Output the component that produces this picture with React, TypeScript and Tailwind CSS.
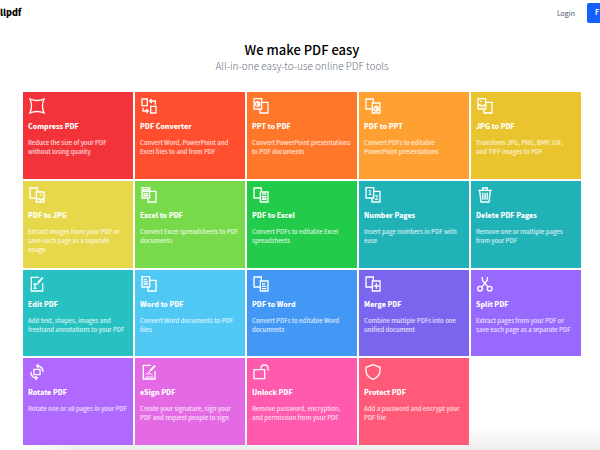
import type { ReactNode } from 'react'

interface Tool {
  title: string
  description: string
  color: string
  icon: ReactNode
}

// Outline of the page behind / in front, shared by the conversion icons
const frontLeft = (
  <>
    <path d="M3 2H26V33H3Z" />
    <path d="M27 13H45V45H21V34" />
  </>
)

const frontRight = (
  <>
    <path d="M21 33H3V3H25V14" />
    <path d="M22 15H45V45H22Z" />
  </>
)

const icons = {
  compress: <path d="M3 3Q24 12 45 3Q36 24 45 45Q24 36 3 45Q12 24 3 3Z" />,
  converter: (
    <>
      <path d="M3 3H19V23H3Z" />
      <path d="M29 25H45V45H29Z" />
      <path d="M43 20V9H27M32 3L26 9L32 15" />
      <path d="M6 29V39H21M16 33L22 39L16 45" />
    </>
  ),
  pptToPdf: (
    <>
      {frontLeft}
      <circle cx="14" cy="18" r="7" />
      <path d="M14 11V18H21M14 18L19 23" />
    </>
  ),
  pdfToPpt: (
    <>
      {frontRight}
      <circle cx="34" cy="32" r="7" />
      <path d="M34 25V32H41M34 32L39 37" />
    </>
  ),
  jpgToPdf: (
    <>
      {frontLeft}
      <path d="M3 23L9 20L15 26L26 19" />
      <path d="M9 10H13" />
    </>
  ),
  pdfToJpg: (
    <>
      {frontRight}
      <path d="M22 38L29 34L35 40L45 33" />
      <path d="M32 24H37" />
    </>
  ),
  excelToPdf: (
    <>
      {frontLeft}
      <path d="M8 8H21V13H8Z" />
      <path d="M7 19H22M7 26H22M10 17V29M18 17V29" />
    </>
  ),
  pdfToExcel: (
    <>
      {frontRight}
      <path d="M27 21H40" />
      <path d="M26 29H41M26 37H41M30 26V40M37 26V40" />
    </>
  ),
  number: (
    <>
      {frontLeft}
      <text x="14" y="25" textAnchor="middle" fontSize="20" fontWeight="700" fill="currentColor" stroke="none">
        1
      </text>
      <text x="34" y="38" textAnchor="middle" fontSize="19" fontWeight="700" fill="currentColor" stroke="none">
        2
      </text>
    </>
  ),
  trash: (
    <>
      <path d="M4 10H44M17 9V3H31V9" />
      <path d="M8 11L12 45H36L40 11" />
      <path d="M17 17L18 38M24 17V38M31 17L30 38" />
    </>
  ),
  edit: (
    <>
      <path d="M30 4H7V45H41V22" />
      <path d="M27 21L41 5" strokeWidth="6" />
      <path d="M23 26L26 23" />
      <path d="M13 24H23M18 24V37M13 37H23" />
    </>
  ),
  wordToPdf: (
    <>
      {frontLeft}
      <path d="M8 11H17M8 17H21M8 24H21" />
    </>
  ),
  pdfToWord: (
    <>
      {frontRight}
      <path d="M27 24H36M27 31H40M27 38H40" />
    </>
  ),
  merge: (
    <>
      {frontRight}
      <path d="M34 22V38M26 30H42" />
    </>
  ),
  split: (
    <>
      <circle cx="9" cy="38" r="7" />
      <circle cx="38" cy="38" r="7" />
      <path d="M14 33L30 14L32 3M33 33L17 14L15 3" />
    </>
  ),
  rotate: (
    <>
      <path d="M15 16H33V32H15Z" />
      <path d="M24 6C36 6 42 14 42 24M29 1L23 6L29 11" />
      <path d="M24 42C12 42 6 34 6 24M19 37L25 42L19 47" />
    </>
  ),
  sign: (
    <>
      <path d="M30 4H7V45H42V22" />
      <path d="M27 21L42 5" strokeWidth="6" />
      <path d="M22 27L26 23" />
      <path d="M13 32L19 28L23 32L27 28L31 32H35M13 39H36" strokeWidth="3" />
    </>
  ),
  unlock: (
    <>
      <path d="M3 17H35V44H3Z" />
      <path d="M24 17V12C24 6 28 3 34 3S45 6 45 12V20" />
    </>
  ),
  protect: <path d="M24 2L45 10V20C45 32 36 41 24 46C12 41 3 32 3 20V10Z" />,
}

const tools: Tool[] = [
  { title: 'Compress PDF', description: 'Reduce the size of your PDF\nwithout losing quality', color: 'bg-[#f23339]', icon: icons.compress },
  { title: 'PDF Converter', description: 'Convert Word, PowerPoint and\nExcel files to and from PDF', color: 'bg-[#ff4f2f]', icon: icons.converter },
  { title: 'PPT to PDF', description: 'Convert PowerPoint presentations\nto PDF documents', color: 'bg-[#ff772a]', icon: icons.pptToPdf },
  { title: 'PDF to PPT', description: 'Convert PDFs to editable\nPowerPoint presentations', color: 'bg-[#ffa033]', icon: icons.pdfToPpt },
  { title: 'JPG to PDF', description: 'Transform JPG, PNG, BMP, GIF,\nand TIFF images to PDF', color: 'bg-[#eac42f]', icon: icons.jpgToPdf },
  { title: 'PDF to JPG', description: 'Extract images from your PDF or\nsave each page as a separate\nimage', color: 'bg-[#e7d74a]', icon: icons.pdfToJpg },
  { title: 'Excel to PDF', description: 'Convert Excel spreadsheets to PDF\ndocuments', color: 'bg-[#78da4a]', icon: icons.excelToPdf },
  { title: 'PDF to Excel', description: 'Convert PDFs to editable Excel\nspreadsheets', color: 'bg-[#22cb4a]', icon: icons.pdfToExcel },
  { title: 'Number Pages', description: 'Insert page numbers in PDF with\nease', color: 'bg-[#21b2b8]', icon: icons.number },
  { title: 'Delete PDF Pages', description: 'Remove one or multiple pages\nfrom your PDF', color: 'bg-[#21b2b8]', icon: icons.trash },
  { title: 'Edit PDF', description: 'Add text, shapes, images and\nfreehand annotations to your PDF', color: 'bg-[#27c1c1]', icon: icons.edit },
  { title: 'Word to PDF', description: 'Convert Word documents to PDF\nfiles', color: 'bg-[#50c8f4]', icon: icons.wordToPdf },
  { title: 'PDF to Word', description: 'Convert PDFs to editable Word\ndocuments', color: 'bg-[#4298f4]', icon: icons.pdfToWord },
  { title: 'Merge PDF', description: 'Combine multiple PDFs into one\nunified document', color: 'bg-[#7b64ee]', icon: icons.merge },
  { title: 'Split PDF', description: 'Extract pages from your PDF or\nsave each page as a separate PDF', color: 'bg-[#9869fd]', icon: icons.split },
  { title: 'Rotate PDF', description: 'Rotate one or all pages in your PDF', color: 'bg-[#b069ff]', icon: icons.rotate },
  { title: 'eSign PDF', description: 'Create your signature, sign your\nPDF and request people to sign', color: 'bg-[#e469e4]', icon: icons.sign },
  { title: 'Unlock PDF', description: 'Remove password, encryption,\nand permission from your PDF', color: 'bg-[#ff5aae]', icon: icons.unlock },
  { title: 'Protect PDF', description: 'Add a password and encrypt your\nPDF file', color: 'bg-[#ff5a78]', icon: icons.protect },
]

function ToolCard({ title, description, color, icon }: Tool) {
  return (
    <a href="#" className={`block px-[5px] pt-[6px] text-white ${color}`}>
      <svg
        viewBox="0 0 48 48"
        className="ml-px size-4 overflow-visible"
        fill="none"
        stroke="currentColor"
        strokeWidth="4"
        aria-hidden="true"
      >
        {icon}
      </svg>
      <h2 className="mt-[6px] text-[7px] leading-3 font-black">{title}</h2>
      <p className="mt-[6px] text-[6px] leading-[9px] font-medium whitespace-pre-line text-white/80">{description}</p>
    </a>
  )
}

export default function App() {
  return (
    <div className="min-h-screen overflow-hidden bg-[linear-gradient(to_right,white_20px,transparent_80px),linear-gradient(to_top,#eeeeee,white_24px)] font-['Noto_Sans_CJK_SC','Open_Sans',sans-serif]">
      <header className="flex h-[25px] items-center justify-between">
        <a href="#" className="text-[9px] leading-3 font-black text-black">
          llpdf
        </a>
        <nav className="flex items-center gap-3">
          <a href="#" className="text-[7px] leading-3 text-gray-600">
            Login
          </a>
          {/* 按钮紧贴窗口右侧 */}
          <button className="h-5 w-[13px] rounded-l-[2px] bg-[#1461ff] pl-2 text-left text-[7px] font-bold text-white">
            F
          </button>
        </nav>
      </header>

      <main className="pr-[19px] pl-[23px]">
        <div className="pt-4 text-center">
          <h1 className="text-[13px] leading-[18px] font-medium text-black">We make PDF easy</h1>
          <p className="text-[10px] leading-[14px] font-light text-gray-500">All-in-one easy-to-use online PDF tools</p>
        </div>

        <div className="mt-[19px] grid min-h-[353px] grid-cols-5 grid-rows-4 gap-[2px]">
          {tools.map((tool) => (
            <ToolCard key={tool.title} {...tool} />
          ))}
        </div>
      </main>
    </div>
  )
}
